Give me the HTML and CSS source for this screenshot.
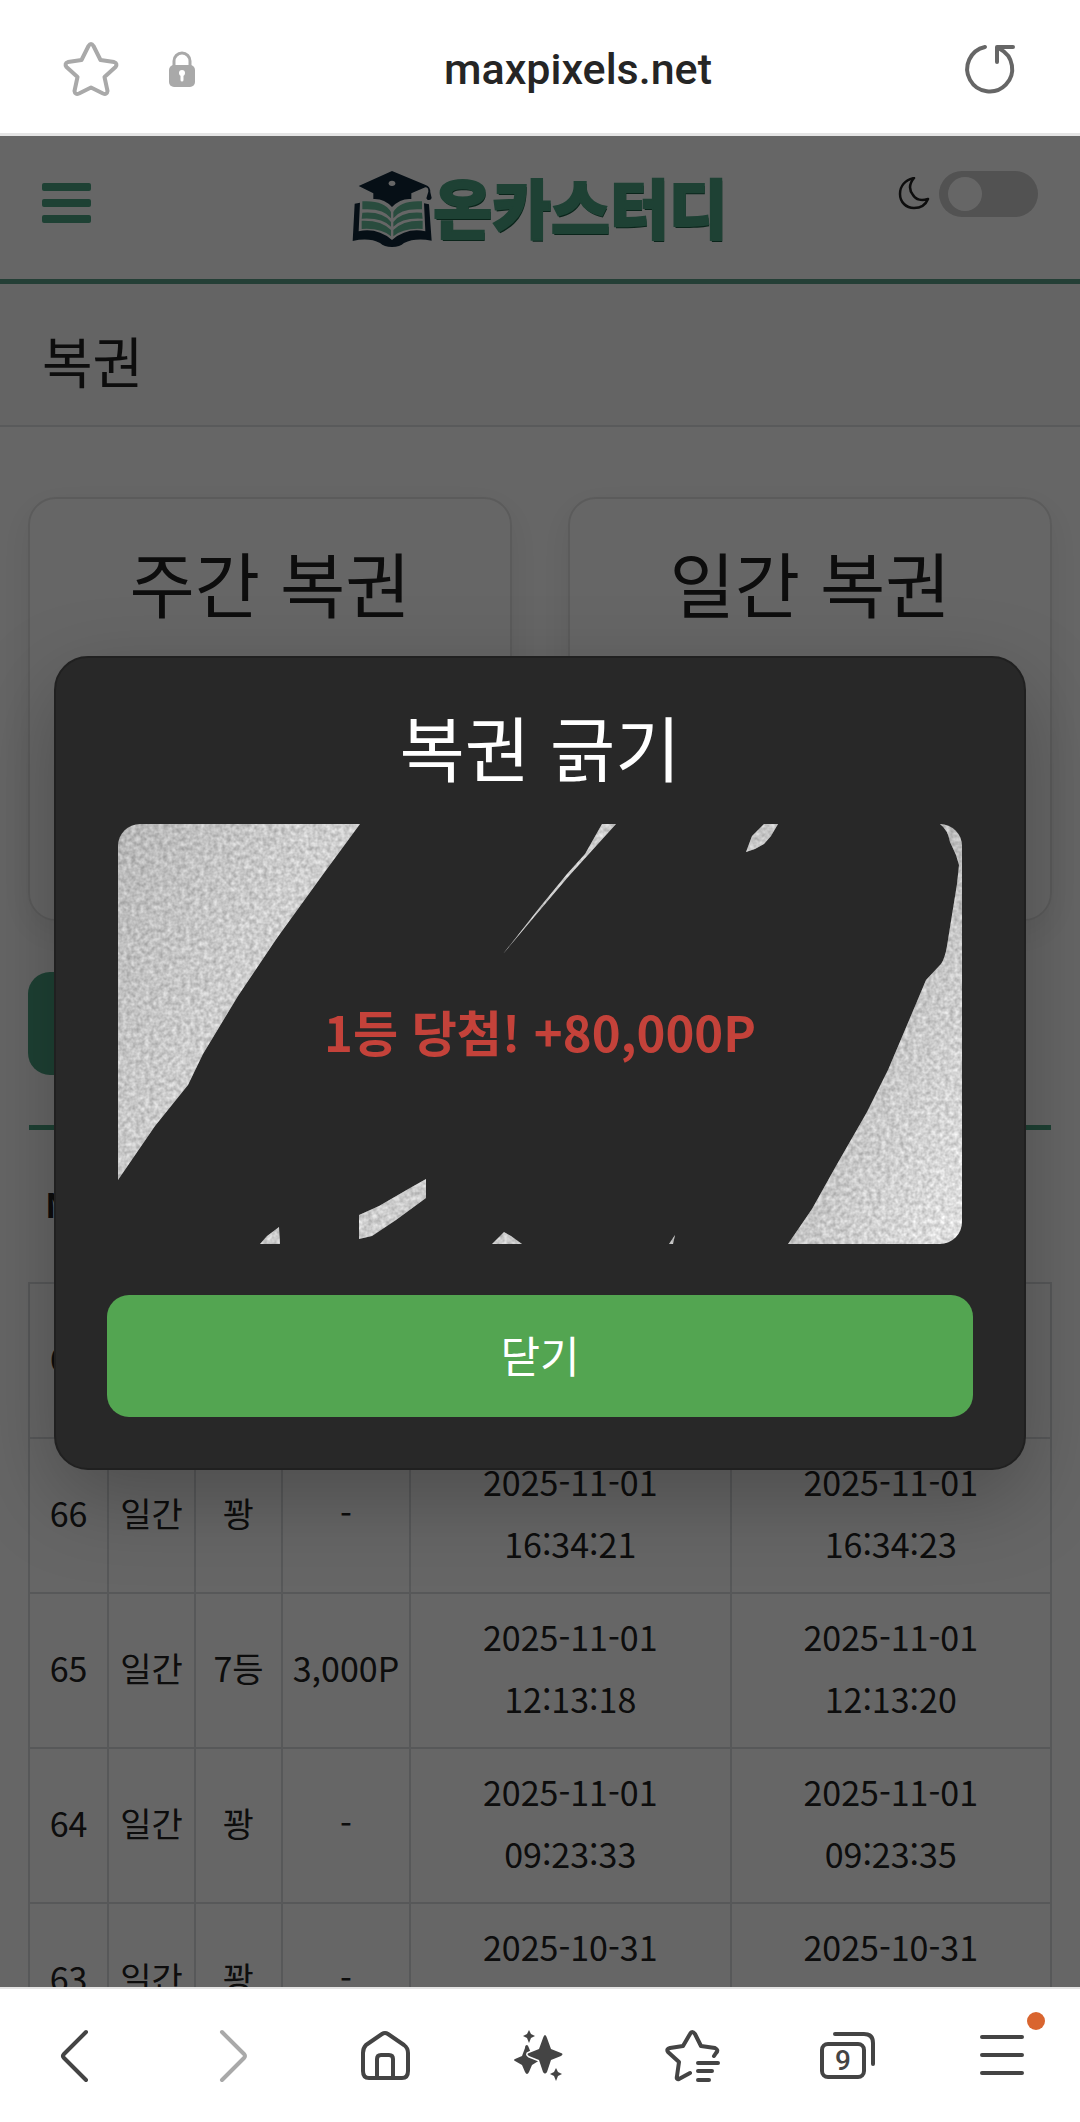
FILE: index.html
```html
<!DOCTYPE html>
<html lang="ko">
<head>
    <meta charset="UTF-8">
    <meta name="viewport" content="width=device-width, initial-scale=1.0">
    <title>복권</title>
    <link rel="stylesheet" href="styles.css">
</head>
<body>
    <div class="address-bar">
        <button class="icon-btn" aria-label="북마크">
            <svg width="60" height="60" viewBox="0 0 60 60" fill="none" stroke="#a9a9a9" stroke-width="4" stroke-linejoin="round">
                <path d="M27.500 7q2.500-4 5 0L39.500 21 53 23q4 1.500 1.500 5L43.500 38 46.500 52q-.5 4-4.500 2.500L30 48.500 18 54.500q-4 1.500-4.500-2.500L16.500 38 5.500 28q-2.500-3.500 1.500-5L20.500 21z"/>
            </svg>
        </button>
        <svg class="lock" width="28" height="36" viewBox="0 0 28 36">
            <path d="M6 16V10a8 8 0 0 1 16 0v6" fill="none" stroke="#a9a9a9" stroke-width="3"/>
            <rect x="1" y="14" width="26" height="22" rx="5" fill="#a9a9a9"/>
            <circle cx="14" cy="22" r="3" fill="#fff"/>
            <path d="M14 23v6" stroke="#fff" stroke-width="3" stroke-linecap="round"/>
        </svg>
        <div class="url">maxpixels.net</div>
        <button class="icon-btn" aria-label="새로고침">
            <svg width="60" height="60" viewBox="0 0 60 60" fill="none" stroke="#666" stroke-width="4" stroke-linecap="round" stroke-linejoin="round">
                <path d="M25 8A22.500 22.500 0 1 0 40 10"/>
                <path d="M53 8H37v15"/>
            </svg>
        </button>
    </div>

    <div class="viewport">
        <div class="header">
            <button class="icon-btn menu-btn" aria-label="메뉴">
                <span></span>
                <span></span>
                <span></span>
            </button>
            <a class="logo" href="#">
                <svg width="81" height="78" viewBox="70 60 243 234">
                    <g fill="#0f2638">
                        <path d="M78 161l16-3-4 86q55-12 100 26 45-38 100-26l-4-84 15 3 8 109q-50-9-83 7-12 12-36 12t-36-12q-33-17-82-6z"/>
                        <path d="M90 108l100-45 101 42q14 4 14 22l4 17q-2 8-13 5l-3-4 6-20q1-13-9-13l-42 18v17q-32-3-58 24-24-26-56-24v-17z"/>
                    </g>
                    <ellipse cx="190" cy="100" rx="10" ry="8" fill="#fff"/>
                    <g fill="#66bd9c">
                        <path d="M101 154q65-4 86 32v19q-22-31-86-27zM101 188q62-5 86 28v14q-27-28-88-24zM99 212q60-2 88 28v19q-30-26-88-22z"/>
                        <path d="M280 154q-65-4-86 32v19q22-31 86-27zM280 188q-62-5-86 28v14q27-28 88-24zM282 212q-60-2-88 28v19q30-26 88-22z"/>
                    </g>
                </svg>
                <span class="logo-text">온카스터디</span>
            </a>
            <label class="theme" aria-label="다크 모드">
                <svg width="32" height="34" viewBox="0 0 32 34" fill="none" stroke="#212121" stroke-width="2.500" stroke-linejoin="round">
                    <path d="M16 1C7 3 2 9 2 17c0 8 6 14 14 14 7 0 12-4 14-9-6 2-12 1-15-4-4-5-4-11 1-17z"/>
                </svg>
                <input type="checkbox" class="switch">
            </label>
        </div>

        <h1 class="page-title">복권</h1>

        <div class="container">
            <div class="cards">
                <div class="card"><h2>주간 복권</h2></div>
                <div class="card"><h2>일간 복권</h2></div>
            </div>

            <button class="record-btn">내 기록</button>

            <table class="records">
                <colgroup>
                    <col class="col-no">
                    <col class="col-type">
                    <col class="col-rank">
                    <col class="col-point">
                    <col>
                    <col>
                </colgroup>
                <thead>
                    <tr><th>No</th><th>종류</th><th>등수</th><th>당첨</th><th>구매</th><th>확인</th></tr>
                </thead>
                <tbody>
                    <tr><td>67</td><td>일간</td><td>1등</td><td></td><td></td><td></td></tr>
                    <tr><td>66</td><td>일간</td><td>꽝</td><td>-</td><td>2025-11-01<br>16:34:21</td><td>2025-11-01<br>16:34:23</td></tr>
                    <tr><td>65</td><td>일간</td><td>7등</td><td>3,000P</td><td>2025-11-01<br>12:13:18</td><td>2025-11-01<br>12:13:20</td></tr>
                    <tr><td>64</td><td>일간</td><td>꽝</td><td>-</td><td>2025-11-01<br>09:23:33</td><td>2025-11-01<br>09:23:35</td></tr>
                    <tr><td>63</td><td>일간</td><td>꽝</td><td>-</td><td>2025-10-31<br>&nbsp;</td><td>2025-10-31<br>&nbsp;</td></tr>
                </tbody>
            </table>
        </div>

        <div class="overlay">
            <div class="modal" role="dialog" aria-labelledby="modal-title">
                <h2 id="modal-title">복권 긁기</h2>
                <div class="scratch">
                    <div class="prize">1등 당첨! +80,000P</div>
                    <!-- 긁고 남은 은박 -->
                    <svg class="foil" viewBox="0 0 844 420" preserveAspectRatio="none">
                        <defs>
                            <linearGradient id="silver" x1="0" y1="0" x2="844" y2="420" gradientUnits="userSpaceOnUse">
                                <stop offset="0" stop-color="#b9b9b9"/>
                                <stop offset=".2" stop-color="#d0d0d0"/>
                                <stop offset=".5" stop-color="#cecece"/>
                                <stop offset=".8" stop-color="#c0c0c0"/>
                                <stop offset="1" stop-color="#e4e4e4"/>
                            </linearGradient>
                            <filter id="grain" x="0" y="0" width="100%" height="100%" color-interpolation-filters="sRGB">
                                <feTurbulence type="fractalNoise" baseFrequency=".22" numOctaves="2" seed="4"/>
                                <feColorMatrix values=".35 0 0 0 .62  .35 0 0 0 .62  .35 0 0 0 .62  0 0 0 0 1" result="noise"/>
                                <feBlend in="SourceGraphic" in2="noise" mode="multiply"/>
                                <feComponentTransfer>
                                    <feFuncR type="linear" slope="1.250"/>
                                    <feFuncG type="linear" slope="1.250"/>
                                    <feFuncB type="linear" slope="1.250"/>
                                </feComponentTransfer>
                                <feComposite in2="SourceGraphic" operator="in"/>
                            </filter>
                        </defs>
                        <g fill="url(#silver)" filter="url(#grain)">
                            <path d="M0 0H242L206 49 159 114 120 172 85 230 70 261 37 302 0 356z"/>
                            <path d="M484 0h14L450 53 422 86 385 130 422 83 449 50 467 30z"/>
                            <path d="M646 0h14l-7 12-7 8-9 5-9 3 6-16z"/>
                            <path d="M822 0q8 6 10 18l6 13 3 10-2 19-6 37-4 25q-2 12-6 18l-15 16-16 38-22 52-21 42-31 54-24 43-24 35H844V0z"/>
                            <path d="M241 391l20-9 31-18 16-9v19l-30 22-24 16-13 3z"/>
                            <path d="M142 420l7-8 12-9 1 17zM374 420l12-12 7 4 11 8zM551 420l6-9-2 9z"/>
                        </g>
                    </svg>
                </div>
                <button class="close-btn">닫기</button>
            </div>
        </div>
    </div>

    <div class="toolbar">
        <button class="icon-btn" aria-label="뒤로">
            <svg width="60" height="60" viewBox="0 0 60 60"><path d="M39 6L17 28q-2 2 0 4L39 54"/></svg>
        </button>
        <button class="icon-btn forward" aria-label="앞으로">
            <svg width="60" height="60" viewBox="0 0 60 60"><path d="M21 6L43 28q2 2 0 4L21 54"/></svg>
        </button>
        <button class="icon-btn" aria-label="홈">
            <svg width="60" height="60" viewBox="0 0 60 60">
                <path d="M7 27q0-5 3-8L26 8q3-2 6 0L48 19q4 3 4 8V45q0 7-6 7H13q-6 0-6-7z"/>
                <path d="M21 52V33q0-4 4-4h8q4 0 4 4v19"/>
            </svg>
        </button>
        <button class="icon-btn" aria-label="AI">
            <svg class="solid" width="60" height="60" viewBox="0 0 60 60">
                <path d="M17 19q1 0 2 3l3 8 8 4-8 5-3 7q-2 4-4 0l-3-7-7-4q-2-1 0-2l7-3 3-8q0-3 2-3z"/>
                <path class="cut" d="M35 9q1 0 2 3l4 11 10 4q3 1 0 3l-10 4-4 12q-2 3-4 0l-4-12-10-4q-3-2 0-3l10-4 4-11q1-3 2-3z"/>
                <path d="M19 4l2 4 4 2-4 2-2 5-2-5-4-2 4-2zM46 42l2 4 4 2-4 2-2 5-2-5-4-2 4-2z"/>
            </svg>
        </button>
        <button class="icon-btn" aria-label="북마크 목록">
            <svg width="60" height="60" viewBox="0 0 60 60">
                <path d="M26 47L15 53q-3 1-2-3L15 36 4 26q-2-3 2-4L19 20 26 8q2-4 5 0L37 20 51 22q4 2 1 5L50 30"/>
                <path d="M34 37H54M34 45H48M34 54H45"/>
            </svg>
        </button>
        <button class="icon-btn" aria-label="탭 9개">
            <svg width="60" height="60" viewBox="0 0 60 60">
                <rect x="3" y="18" width="42" height="33" rx="6"/>
                <path d="M16 8H45q9 0 9 9V38"/>
                <text x="24" y="44" text-anchor="middle">9</text>
            </svg>
        </button>
        <button class="icon-btn" aria-label="더보기">
            <svg width="60" height="60" viewBox="0 0 60 60"><path d="M9 11H49M9 29H49M9 47H49"/></svg>
            <span class="badge"></span>
        </button>
    </div>
</body>
</html>
```
FILE: styles.css
```css
* {
    box-sizing: border-box;
}

body {
    margin: 0;
    height: 100vh;
    display: flex;
    flex-direction: column;
    font-family: "Noto Sans CJK KR", sans-serif;
    color: #212121;
    background-color: #fff;
}

button {
    font-family: inherit;
    border: none;
}

.icon-btn {
    position: relative;
    padding: 0;
    background: none;
    line-height: 0;
}

/* address bar */
.address-bar {
    display: flex;
    align-items: center;
    flex-shrink: 0;
    height: 136px;
    padding: 5px 60px 0 61px;
    border-bottom: 3px solid #e5e5e5;
}

.lock {
    margin-left: 47px;
}

.url {
    flex: 1;
    text-align: center;
    font-family: Roboto, sans-serif;
    font-size: 43px;
    font-weight: 500;
    line-height: 60px;
    color: #252525;
}

/* page */
.viewport {
    position: relative;
    flex: 1;
    min-height: 0;
    overflow: hidden;
}

.header {
    display: grid;
    grid-template-columns: 1fr auto 1fr;
    align-items: start;
    height: 148px;
    padding: 35px 42px 0;
    border-bottom: 5px solid #5a9e87;
}

.menu-btn {
    display: flex;
    flex-direction: column;
    gap: 8px;
    margin-top: 12px;
}

.menu-btn span {
    width: 49px;
    height: 8px;
    border-radius: 2px;
    background-color: #4ba282;
}

.logo {
    display: flex;
    align-items: center;
    height: 76px;
    text-decoration: none;
}

.logo-text {
    padding-bottom: 8px;
    font-size: 64px;
    font-weight: 900;
    line-height: 76px;
    color: #4ba282;
    -webkit-text-stroke: 2px #4ba282;
    text-shadow: 1px 2px 0 #1b5b42;
}

.theme {
    display: flex;
    justify-content: flex-end;
    align-items: center;
    gap: 9px;
}

.switch {
    appearance: none;
    width: 99px;
    height: 46px;
    margin: 0;
    padding: 6px 9px;
    border-radius: 23px;
    background-color: #ccc;
}

.switch::before {
    content: "";
    display: block;
    width: 34px;
    height: 34px;
    border-radius: 50%;
    background-color: #fff;
}

.page-title {
    margin: 0;
    padding: 35px 42px 25px;
    font-size: 55px;
    font-weight: 400;
    line-height: 81px;
    background-color: #f9f9f9;
    border-bottom: 2px solid #dfe1e3;
}

.container {
    padding: 70px 28px 0;
}

.cards {
    display: grid;
    grid-template-columns: 1fr 1fr;
    gap: 56px;
}

.card {
    min-height: 424px;
    padding: 42px;
    text-align: center;
    border: 2px solid #e4e4e4;
    border-radius: 28px;
    box-shadow: 0 11px 34px rgba(0,0,0,0.08);
}

.card h2,
.modal h2 {
    margin: 0;
    font-size: 71px;
    font-weight: 400;
    line-height: 80px;
}

.record-btn {
    display: block;
    height: 103px;
    margin: 51px 0 50px;
    padding: 0 56px;
    font-size: 43px;
    color: #fff;
    background-color: #4ba282;
    border-radius: 22px;
}

.records {
    width: 100%;
    table-layout: fixed;
    border-collapse: collapse;
    border-top: 5px solid #4ba282;
    text-align: center;
    font-size: 34px;
    line-height: 62px;
}

.records th {
    height: 155px;
    padding: 0 0 4px;
}

.records td {
    height: 155px;
    padding: 0 0 4px;
    border: 2px solid #dadcde;
}

.col-no {
    width: 79px;
}

.col-type,
.col-rank {
    width: 87px;
}

.col-point {
    width: 128px;
}

/* modal */
.overlay {
    position: absolute;
    inset: 0;
    display: flex;
    align-items: center;
    justify-content: center;
    padding-top: 3px;
    background-color: rgba(0,0,0,0.6);
}

.modal {
    width: 90%;
    padding: 47px 51px 51px;
    text-align: center;
    color: #fff;
    background-color: #282828;
    border: 2px solid #202020;
    border-radius: 34px;
    box-shadow: 0 28px 84px rgba(0,0,0,0.25);
}

.scratch {
    position: relative;
    display: flex;
    align-items: center;
    justify-content: center;
    height: 420px;
    margin: 39px 11px 51px;
    padding-bottom: 8px;
    overflow: hidden;
    border-radius: 22px;
}

.prize {
    font-size: 49px;
    font-weight: 700;
    color: #c4423a;
}

.foil {
    position: absolute;
    inset: 0;
    width: 100%;
    height: 100%;
}

.close-btn {
    width: 100%;
    height: 122px;
    padding-bottom: 6px;
    font-size: 43px;
    color: #fff;
    background-color: #53a551;
    border-radius: 22px;
}

/* bottom toolbar */
.toolbar {
    display: grid;
    grid-template-columns: repeat(7, 1fr);
    align-items: center;
    justify-items: center;
    flex-shrink: 0;
    height: 135px;
    border-top: 2px solid #e5e5e5;
}

.toolbar svg {
    fill: none;
    stroke: #444;
    stroke-width: 4px;
    stroke-linecap: round;
    stroke-linejoin: round;
}

.toolbar .forward svg {
    stroke: #a9a9a9;
}

.toolbar .solid {
    fill: #444;
    stroke: none;
}

.toolbar .cut {
    stroke: #fff;
    stroke-width: 3px;
    paint-order: stroke;
}

.toolbar text {
    font-family: Roboto, sans-serif;
    font-size: 28px;
    font-weight: 500;
    fill: #444;
    stroke: none;
}

.badge {
    position: absolute;
    top: -14px;
    right: -12px;
    width: 18px;
    height: 18px;
    border-radius: 50%;
    background-color: #d9652f;
}
```
